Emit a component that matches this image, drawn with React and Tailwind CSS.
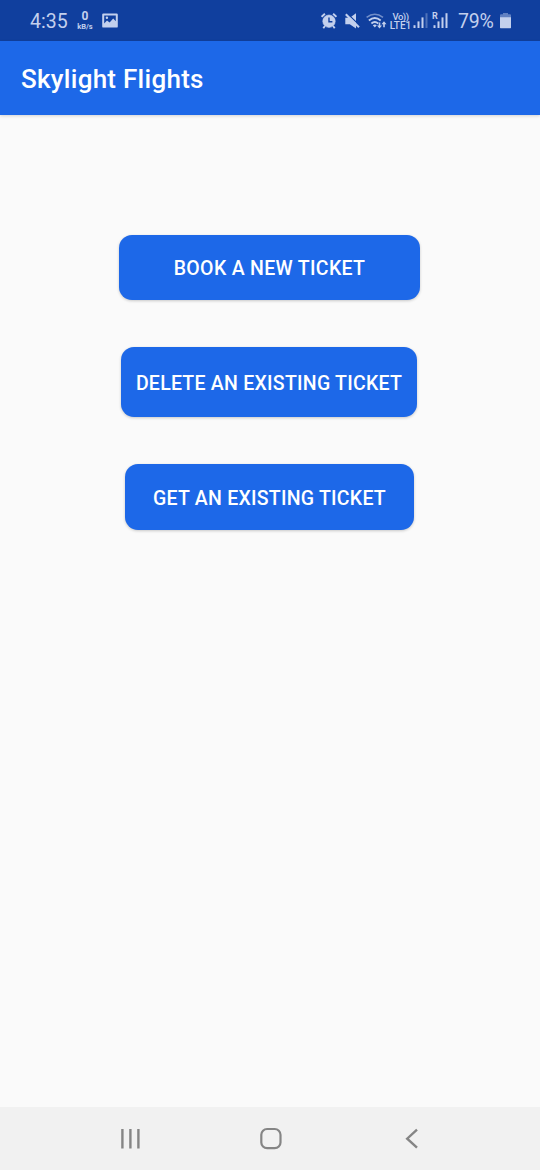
const ROBOTO = "font-['Roboto','Liberation_Sans',sans-serif]";

function PictureIcon() {
  return (
    <svg className="ml-[8px] h-4 w-4" viewBox="0 0 16 16">
      <path
        d="M1.4.5H14.6Q15.8.5 15.8 1.6V13.4Q15.8 14.6 14.6 14.6H1.4Q.2 14.6.2 13.4V1.6Q.2.5 1.4.5ZM2.2 2.5V10.4L5 7.4 7.6 9.6 11.2 5.6 13.8 8.2V2.5Z"
        fill="currentColor"
        fillRule="evenodd"
      />
      <circle cx="4.9" cy="4.8" r="1.2" fill="currentColor" />
    </svg>
  );
}

function AlarmIcon() {
  return (
    <svg className="h-4 w-4" viewBox="0 0 16 16" fill="none" stroke="currentColor">
      <circle cx="8" cy="8.2" r="6.2" fill="currentColor" strokeWidth="0.6" />
      <path d="M0.6 3.8 3.9 .8M15.4 3.8 12.1 .8M3.9 13 2.3 15.2M12.1 13l1.6 2.2" strokeWidth="1.9" />
      <path d="M8 4.4V8.7H11.4" stroke="#103f9e" strokeWidth="1.4" />
    </svg>
  );
}

function MuteIcon() {
  return (
    <svg className="ml-[8px] h-4 w-[15px]" viewBox="0 0 15 16">
      <path d="M.3 4.7H4.8L11 .2V15.4L4.8 11.2H.3Z" fill="currentColor" />
      <path d="M3 1.2 15 12.8" stroke="#103f9e" strokeWidth="1.3" />
      <path d="M.8 1.2 14 14.2" stroke="currentColor" strokeWidth="2.1" />
    </svg>
  );
}

function WifiIcon() {
  return (
    <svg className="ml-[6px] h-4 w-[21px]" viewBox="0 0 21 16" fill="none" stroke="currentColor">
      <path d="M.6 4.4Q8.8-2 17 4.4" strokeWidth="1.5" opacity=".55" />
      <path d="M2.9 7.4Q8.8 2.6 14.7 7.4" strokeWidth="1.9" />
      <path d="M5.4 10.4Q8.8 7.7 12.2 10.4" strokeWidth="1.9" />
      <path d="M6.8 12.2Q8.8 10.6 10.8 12.2L8.8 14.5Z" fill="currentColor" stroke="none" />
      <path d="M12.7 9.4V12.4H11L13.5 15.4 16 12.4H14.3V9.4ZM18 8.2 15.5 11.2H17.2V14.2H18.8V11.2H20.5Z" fill="currentColor" stroke="none" />
    </svg>
  );
}

function SignalBars({ faded }) {
  return (
    <svg className="h-4 w-[15px]" viewBox="0 0 15 16" fill="currentColor">
      <rect x="0.5" y="12.2" width="2" height="2.8" />
      <rect x="4.5" y="8.4" width="2" height="6.6" />
      <rect x="8.5" y="4.4" width="2" height="10.6" />
      <rect x="12.5" y="0.2" width="2" height="14.8" opacity={faded ? 0.35 : 1} />
    </svg>
  );
}

function BatteryIcon() {
  return (
    <svg className="ml-[6px] h-4 w-[11px]" viewBox="0 0 11 16" fill="currentColor">
      <path d="M3 0H8V1.2H10Q11 1.2 11 2.2V5H0V2.2Q0 1.2 1 1.2H3Z" opacity=".45" />
      <path d="M0 4.2H11V14.4Q11 15.2 10.4 15.2H.6Q0 15.2 0 14.4Z" />
    </svg>
  );
}

function StatusBar() {
  return (
    <div className="flex h-[41px] items-center bg-[#103f9e] pl-[30px] pr-[29px] text-[#c3d0ed]">
      <span className="w-[38px] pt-[2px] text-[19.5px] leading-none">4:35</span>
      <span className="ml-[8px] flex w-[18px] flex-col items-center whitespace-nowrap font-bold">
        <span className="text-[12px] leading-[11px]">0</span>
        <span className="text-[7.5px] leading-[9px]">kB/s</span>
      </span>
      <PictureIcon />
      <div className="ml-auto flex items-center">
        <AlarmIcon />
        <MuteIcon />
        <WifiIcon />
        <span className="ml-[3px] flex w-[21px] flex-col items-center whitespace-nowrap pt-px font-medium">
          <span className="text-[9.5px] leading-[8px] tracking-[-0.5px]">Vo))</span>
          <span className="text-[10px] leading-[9px]">LTE1</span>
        </span>
        <span className="ml-[2px] flex"><SignalBars faded /></span>
        <span className="relative ml-[5px] flex">
          <SignalBars />
          <span className="absolute -left-px -top-[1px] pr-px text-[9px] font-bold leading-[8px]">R</span>
        </span>
        <span className="ml-[10px] w-[36px] whitespace-nowrap pt-[2px] text-[19.5px] leading-none tracking-[-0.2px]">79%</span>
        <BatteryIcon />
      </div>
    </div>
  );
}

function TicketButton({ className, children }) {
  return (
    <button className={`whitespace-nowrap rounded-[13px] bg-[#1d68e8] text-[19.5px] font-medium text-white shadow-[0_1px_3px_rgba(0,0,0,0.2)] ${className}`}>
      {children}
    </button>
  );
}

function NavigationBar() {
  return (
    <nav className="flex h-[63px] items-center bg-[#f1f1f1] pl-[120px] text-[#858585]">
      <svg className="h-6 w-[21px]" viewBox="0 0 21 24" fill="none" stroke="currentColor" strokeWidth="2.4">
        <path d="M2.4 2V21.4M10.4 2V21.4M18.4 2V21.4" />
      </svg>
      <svg className="ml-[118px] h-6 w-6" viewBox="0 0 24 24" fill="none" stroke="currentColor" strokeWidth="2.2">
        <rect x="2.3" y="2" width="19.2" height="19.2" rx="5.8" />
      </svg>
      <svg className="ml-[121px] h-6 w-4" viewBox="0 0 16 24" fill="none" stroke="currentColor" strokeWidth="2.4">
        <path d="M13 2.7 3.2 11.7 13 20.7" />
      </svg>
    </nav>
  );
}

export default function App() {
  return (
    <div className={`flex h-[1170px] w-[540px] flex-col overflow-hidden bg-[#fafafa] ${ROBOTO}`}>
      <StatusBar />
      <header className="flex h-[74px] items-center bg-[#1d68e8] pl-[21px] pt-[2px] shadow-[0_1px_3px_rgba(0,0,0,0.16)]">
        <h1 className="whitespace-nowrap text-[26px] font-medium tracking-[0.27px] text-white">Skylight Flights</h1>
      </header>
      <main className="flex flex-1 flex-col items-start pt-[120px]">
        <TicketButton className="ml-[119px] h-[65px] w-[301px] pt-[3px] tracking-[0.32px]">BOOK A NEW TICKET</TicketButton>
        <TicketButton className="ml-[121px] mt-[47px] h-[70px] w-[296px] pt-[3px] tracking-[0.25px]">DELETE AN EXISTING TICKET</TicketButton>
        <TicketButton className="ml-[125px] mt-[47px] h-[66px] w-[289px] pt-[3px] tracking-[0.25px]">GET AN EXISTING TICKET</TicketButton>
      </main>
      <NavigationBar />
    </div>
  );
}
